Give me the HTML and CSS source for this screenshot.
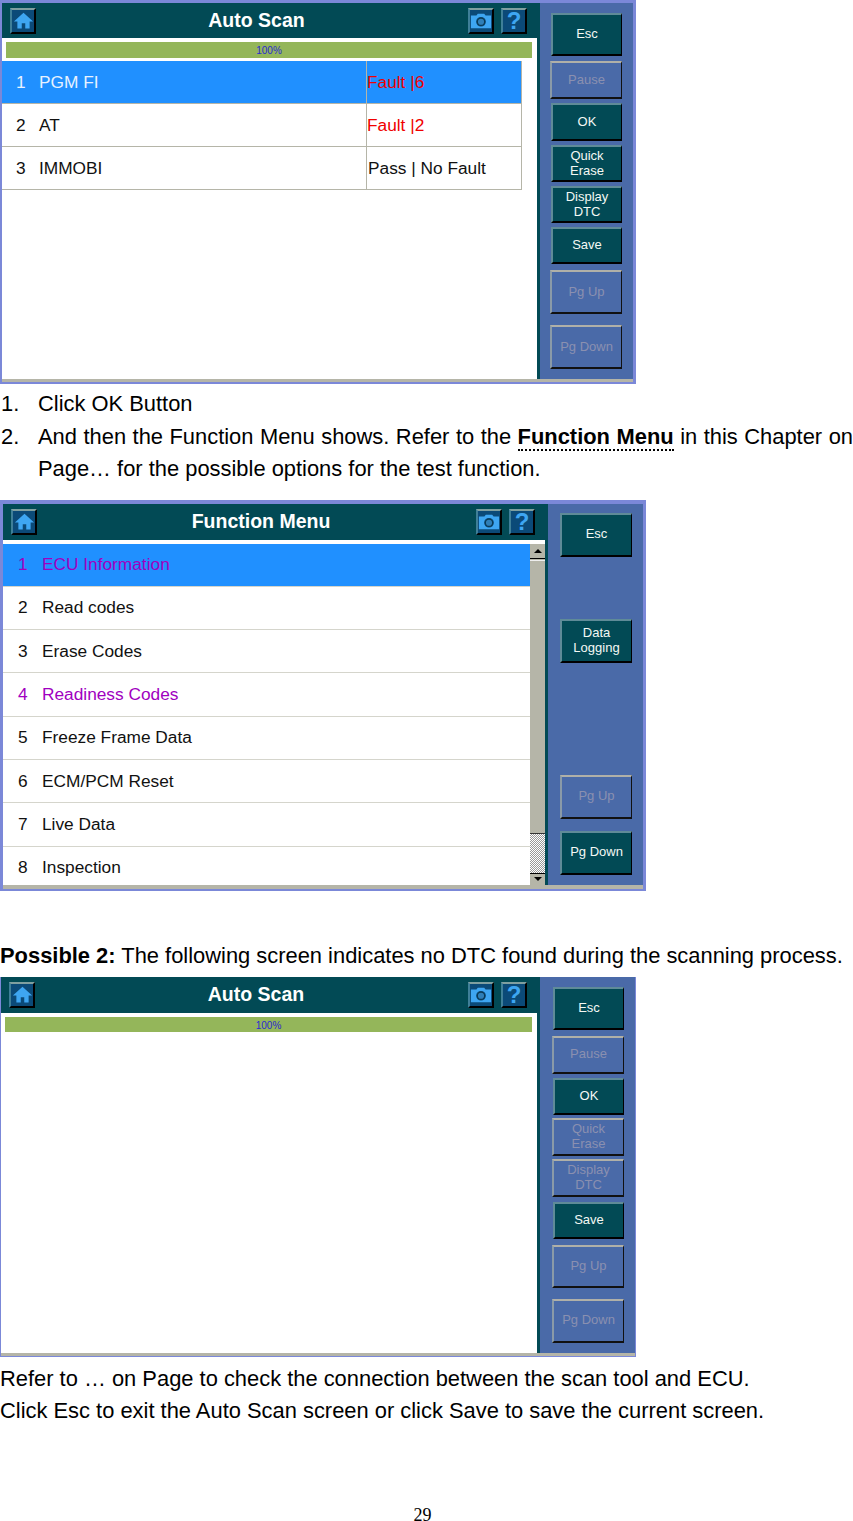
FILE: index.html
```html
<!DOCTYPE html>
<html lang="en">
<head>
    <meta charset="UTF-8">
    <meta name="viewport" content="width=device-width, initial-scale=1.0">
    <title>Auto Scan</title>
    <link rel="stylesheet" href="styles.css">
</head>
<body>

    <svg class="defs" width="0" height="0" aria-hidden="true">
        <symbol id="home" viewBox="0 0 24 24">
            <path d="M12 3 1 13h4v8h5v-6h4v6h5v-8h4z" fill="#3ea6f2"/>
        </symbol>
        <symbol id="camera" viewBox="0 0 24 24">
            <path fill-rule="evenodd" d="M1 6h6l1.500-2h7L17 6h6v14H1zM12 7.500a5.300 5.300 0 1 0 0 10.600 5.300 5.300 0 0 0 0-10.600z" fill="#3ea6f2"/>
            <circle cx="12" cy="12.800" r="4" fill="#2f7fb8" stroke="#0b3a55" stroke-width="1.300"/>
        </symbol>
    </svg>

    <!-- first screen: faults found -->
    <div class="screen screen-one">
        <div class="main">
            <div class="header">
                <button class="icon-btn"><svg width="21" height="21"><use href="#home"/></svg></button>
                <div class="title">Auto Scan</div>
                <button class="icon-btn"><svg width="22" height="22"><use href="#camera"/></svg></button>
                <button class="icon-btn help">?</button>
            </div>
            <div class="content">
                <div class="progress">100%</div>
                <div class="result-list">
                    <div class="row selected">
                        <span class="num">1</span><span class="name">PGM FI</span><span class="status fault">Fault |6</span>
                    </div>
                    <div class="row">
                        <span class="num">2</span><span class="name">AT</span><span class="status fault">Fault |2</span>
                    </div>
                    <div class="row">
                        <span class="num">3</span><span class="name">IMMOBI</span><span class="status">Pass | No Fault</span>
                    </div>
                </div>
            </div>
        </div>
        <div class="side">
            <button class="btn esc">Esc</button>
            <button class="btn mid off gap-5">Pause</button>
            <button class="btn mid gap-4">OK</button>
            <button class="btn short gap-4">Quick<br>Erase</button>
            <button class="btn short gap-4">Display<br>DTC</button>
            <button class="btn short gap-4">Save</button>
            <button class="btn big off gap-6">Pg Up</button>
            <button class="btn big off gap-11">Pg Down</button>
        </div>
    </div>

    <div class="steps">
        <div class="step"><span class="step-num">1.</span><span class="step-text">Click OK Button</span></div>
        <div class="step"><span class="step-num">2.</span><span class="step-text">And then the Function Menu shows. Refer to the <span class="link">Function Menu</span> in this Chapter on Page… for the possible options for the test function.</span></div>
    </div>

    <!-- second screen: function menu -->
    <div class="screen screen-two">
        <div class="main">
            <div class="header">
                <button class="icon-btn"><svg width="21" height="21"><use href="#home"/></svg></button>
                <div class="title">Function Menu</div>
                <button class="icon-btn"><svg width="22" height="22"><use href="#camera"/></svg></button>
                <button class="icon-btn help">?</button>
            </div>
            <div class="content menu-wrap">
                <div class="menu-list">
                    <div class="row selected purple"><span class="num">1</span><span class="name">ECU Information</span></div>
                    <div class="row"><span class="num">2</span><span class="name">Read codes</span></div>
                    <div class="row"><span class="num">3</span><span class="name">Erase Codes</span></div>
                    <div class="row purple"><span class="num">4</span><span class="name">Readiness Codes</span></div>
                    <div class="row"><span class="num">5</span><span class="name">Freeze Frame Data</span></div>
                    <div class="row"><span class="num">6</span><span class="name">ECM/PCM Reset</span></div>
                    <div class="row"><span class="num">7</span><span class="name">Live Data</span></div>
                    <div class="row"><span class="num">8</span><span class="name">Inspection</span></div>
                </div>
                <div class="scrollbar">
                    <div class="arrow up"></div>
                    <div class="thumb"></div>
                    <div class="track"></div>
                    <div class="arrow down"></div>
                </div>
            </div>
        </div>
        <div class="side">
            <button class="btn big">Esc</button>
            <button class="btn big gap-62">Data<br>Logging</button>
            <button class="btn big off gap-112">Pg Up</button>
            <button class="btn big gap-12">Pg Down</button>
        </div>
    </div>

    <p class="para possible"><strong>Possible 2:</strong> The following screen indicates no DTC found during the scanning process.</p>

    <!-- third screen: no DTC -->
    <div class="screen screen-three">
        <div class="main">
            <div class="header">
                <button class="icon-btn"><svg width="21" height="21"><use href="#home"/></svg></button>
                <div class="title">Auto Scan</div>
                <button class="icon-btn"><svg width="22" height="22"><use href="#camera"/></svg></button>
                <button class="icon-btn help">?</button>
            </div>
            <div class="content">
                <div class="progress">100%</div>
            </div>
        </div>
        <div class="side">
            <button class="btn esc">Esc</button>
            <button class="btn mid off gap-6">Pause</button>
            <button class="btn short gap-4">OK</button>
            <button class="btn mid off gap-3">Quick<br>Erase</button>
            <button class="btn mid off gap-3">Display<br>DTC</button>
            <button class="btn short gap-5">Save</button>
            <button class="btn esc off gap-6">Pg Up</button>
            <button class="btn big off gap-11">Pg Down</button>
        </div>
    </div>

    <p class="para after-shot">Refer to … on Page to check the connection between the scan tool and ECU.</p>
    <p class="para">Click Esc to exit the Auto Scan screen or click Save to save the current screen.</p>

    <div class="page-num">29</div>

</body>
</html>
```

FILE: styles.css
```css
body {
    margin: 0;
    width: 853px;
    height: 1521px;
    overflow: hidden;
    background-color: white;
    font-family: "Liberation Sans", Arial, sans-serif;
    font-size: 21.900px;
    color: #000;
}
.defs {
    position: absolute;
}
.screen {
    display: flex;
    box-sizing: border-box;
    background-color: #b5b5a8;
    border: solid #7b88d8;
    border-width: 3px 3px 2px 2px;
}
.screen-one {
    width: 636px;
    height: 384px;
}
.screen-two {
    width: 646px;
    height: 391px;
    margin-top: 14px;
    border-width: 4px 3px 2px 3px;
}
.screen-three {
    width: 636px;
    height: 380px;
    margin-top: 5px;
    border-width: 0 1px 1px 1px;
}
.main {
    flex: 1;
    display: flex;
    flex-direction: column;
    border-right: 3px solid #024a55;
    margin-bottom: 3px;
}
.screen-two .main {
    margin-bottom: 4px;
}
.header {
    display: flex;
    align-items: center;
    gap: 7px;
    height: 35px;
    padding: 0 10px 0 8px;
    background-color: #024a55;
}
.screen-two .header,
.screen-three .header {
    height: 36px;
}
.title {
    flex: 1;
    text-align: center;
    color: white;
    font-size: 19.500px;
    font-weight: bold;
    padding-left: 9px;
}
.icon-btn {
    display: flex;
    align-items: center;
    justify-content: center;
    box-sizing: border-box;
    width: 26px;
    height: 26px;
    padding: 0;
    background-color: #0b4a78;
    border: 2px solid;
    border-color: #7f9fa0 #000 #000 #3f7f98;
    font-family: "Liberation Sans", Arial, sans-serif;
}
.help {
    color: #3ea6f2;
    font-size: 24px;
    font-weight: bold;
}
.content {
    flex: 1;
    background-color: white;
    overflow: hidden;
}
.progress {
    height: 16px;
    margin: 4px 5px 3px 4px;
    background-color: #94b65a;
    color: #2a2ad0;
    font-size: 10px;
    line-height: 17px;
    text-align: center;
}
.screen-three .progress {
    height: 15px;
}
.result-list {
    width: 520px;
}
.row {
    display: flex;
    align-items: center;
    box-sizing: border-box;
    height: 43px;
    font-size: 17.300px;
    color: #111;
    border-bottom: 1px solid #b5b5a8;
}
.result-list .row {
    border-right: 1px solid #b5b5a8;
}
.num {
    width: 37px;
    padding-left: 14px;
    box-sizing: border-box;
}
.menu-list .num {
    width: 39px;
    padding-left: 15px;
}
.name {
    flex: 1;
}
.status {
    box-sizing: border-box;
    width: 155px;
    height: 100%;
    display: flex;
    align-items: center;
    padding-left: 1px;
    border-left: 1px solid #b5b5a8;
}
.fault {
    color: #f00000;
    padding-left: 0;
}
.selected {
    background-color: #2090ff;
    color: #e8f2ff;
}
.purple {
    color: #a000c0;
}
.menu-wrap {
    display: flex;
    padding-top: 4px;
}
.menu-list {
    flex: 1;
    height: 341px;
    overflow: hidden;
}
.menu-list .row {
    height: 43.300px;
    border-bottom-color: #d5d5cc;
}
.scrollbar {
    display: flex;
    flex-direction: column;
    width: 15px;
    height: 341px;
    background-color: #b5b5a8;
}
.arrow {
    height: 14px;
    display: flex;
    align-items: center;
    justify-content: center;
    border-bottom: 1px solid #000;
}
.arrow::before {
    content: "";
    border-left: 4px solid transparent;
    border-right: 4px solid transparent;
}
.arrow.up::before {
    border-bottom: 4px solid #000;
}
.arrow.down::before {
    border-top: 4px solid #000;
}
.arrow.down {
    border-bottom: 0;
    border-top: 1px solid #000;
    height: 11px;
}
.thumb {
    height: 274px;
    border-top: 1px solid #eee;
    border-bottom: 1px solid #333;
    box-sizing: border-box;
    margin-top: 1px;
}
.track {
    flex: 1;
    background-color: white;
    background-image: repeating-conic-gradient(#999 0 25%, #fff 0 50%);
    background-size: 2px 2px;
}
.side {
    display: flex;
    flex-direction: column;
    align-items: flex-end;
    box-sizing: border-box;
    width: 93px;
    padding: 10px 11px 0 0;
    margin-bottom: 3px;
    background-color: #4a6aa8;
}
.screen-two .side {
    width: 95px;
    padding: 9px 11px 0 0;
    margin-bottom: 4px;
}
.screen-three .side {
    width: 95px;
    padding: 10px 11px 0 0;
}
.btn {
    box-sizing: border-box;
    width: 71px;
    padding: 0 0 2px;
    background-color: #024a55;
    color: #f4f8f4;
    border: solid;
    border-width: 2px 1px 2px 2px;
    border-color: #5f8b98 #000 #000 #5f8b98;
    font-family: "Liberation Sans", Arial, sans-serif;
    font-size: 13px;
    line-height: 15px;
}
.screen-two .btn {
    width: 72px;
}
.big {
    height: 44px;
}
.esc {
    height: 43px;
}
.mid {
    height: 38px;
}
.short {
    height: 37px;
}
.off,
.screen-two .off {
    width: 72px;
    background-color: #4a6aa8;
    color: #8a90b0;
    border-color: #b0b0a8 #111 #111 #8a9aa8;
}
.gap-3 { margin-top: 3px; }
.gap-4 { margin-top: 4px; }
.gap-5 { margin-top: 5px; }
.gap-6 { margin-top: 6px; }
.gap-11 { margin-top: 11px; }
.gap-12 { margin-top: 12px; }
.gap-62 { margin-top: 62px; }
.gap-112 { margin-top: 112px; }
.steps {
    margin-top: 4px;
    line-height: 32.500px;
}
.step {
    display: flex;
}
.step-num {
    flex: none;
    width: 37px;
    padding-left: 1px;
}
.step-text {
    flex: 1;
    text-align: justify;
}
.link {
    font-weight: bold;
    border-bottom: 2px dotted #000;
}
.para {
    margin: 0;
    line-height: 32px;
}
.possible {
    margin-top: 49px;
}
.after-shot {
    margin-top: 6px;
}
.page-num {
    margin-top: 81px;
    text-align: center;
    padding-right: 8px;
    font-family: "Liberation Serif", serif;
    font-size: 18px;
    line-height: 14px;
}
```
